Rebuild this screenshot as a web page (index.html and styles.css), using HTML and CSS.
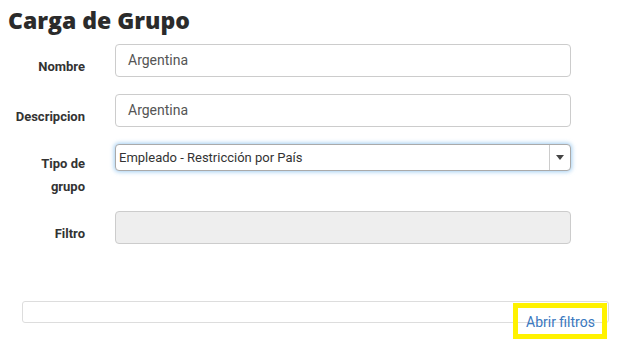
FILE: index.html
```html
<!DOCTYPE html>
<html lang="es">
<head>
<meta charset="utf-8">
<title>Carga de Grupo</title>
<link rel="stylesheet" href="styles.css">
</head>
<body>
<div class="page">
  <h1 class="title">Carga de Grupo</h1>
  <form class="form">
    <div class="row">
      <label class="label">Nombre</label>
      <div class="field"><div class="input">Argentina</div></div>
    </div>
    <div class="row">
      <label class="label">Descripcion</label>
      <div class="field"><div class="input">Argentina</div></div>
    </div>
    <div class="row row-tall">
      <label class="label label-multi">Tipo de<br>grupo</label>
      <div class="field">
        <div class="select">
          <span class="select-text">Empleado - Restricción por País</span>
          <span class="select-arrow"><span class="caret"></span></span>
        </div>
      </div>
    </div>
    <div class="row">
      <label class="label">Filtro</label>
      <div class="field"><div class="input input-disabled"></div></div>
    </div>
  </form>
  <div class="filters">
    <div class="panel"></div>
    <a class="open-link" href="#">Abrir filtros</a>
  </div>
</div>
</body>
</html>
```

FILE: styles.css
```css
* { box-sizing: border-box; }
html, body { margin: 0; padding: 0; background: #fff; }
body { font-family: Roboto, "Liberation Sans", Arial, sans-serif; color: #333; }

.page { padding: 4px 0 24px 8px; width: 639px; min-height: 347px; }

.title {
  margin: 0;
  font-family: "Open Sans", "Liberation Sans", sans-serif;
  font-weight: 800;
  font-size: 23px;
  line-height: 32px;
  color: #2b2b2b;
}

.form { display: flex; flex-direction: column; gap: 17px; margin-top: 8px; }

.row { display: flex; align-items: flex-start; gap: 30px; }
.row-tall { margin-bottom: -4px; }

.label {
  width: 77px;
  text-align: right;
  font-size: 13px;
  font-weight: 700;
  line-height: 20px;
  color: #333;
  padding-top: 13px;
}
.label-multi { padding-top: 8px; line-height: 23px; }

.field { width: 456px; }

.input {
  height: 33px;
  border: 1px solid #ccc;
  border-radius: 4px;
  padding: 0 12px;
  font-size: 14px;
  line-height: 31px;
  color: #555;
  background: #fff;
}
.input-disabled { background: #eee; }

.select {
  height: 27px;
  display: flex;
  border: 1px solid #aaa;
  border-radius: 4px;
  background: #fff;
  box-shadow: 0 0 4px 1px rgba(102, 175, 233, 0.6);
}
.select-text {
  flex: 1;
  padding-left: 3px;
  font-size: 13px;
  line-height: 25px;
  color: #333;
}
.select-arrow {
  width: 21px;
  border-left: 1px solid #ccc;
  display: flex;
  align-items: center;
  justify-content: center;
}
.caret {
  width: 0; height: 0;
  border-left: 4px solid transparent;
  border-right: 4px solid transparent;
  border-top: 5px solid #444;
}

.filters { position: relative; margin: 57px 0 0 14px; width: 587px; }
.panel {
  height: 22px;
  border: 1px solid #ddd;
  border-radius: 3px;
  background: #fff;
}
.open-link {
  position: absolute;
  top: 2px;
  left: 491px;
  display: block;
  width: 94px;
  height: 36px;
  border: 5px solid #fff200;
  padding: 6px 0 0 8px;
  font-size: 14px;
  line-height: 16px;
  color: #3a78c0;
  text-decoration: none;
}
```
